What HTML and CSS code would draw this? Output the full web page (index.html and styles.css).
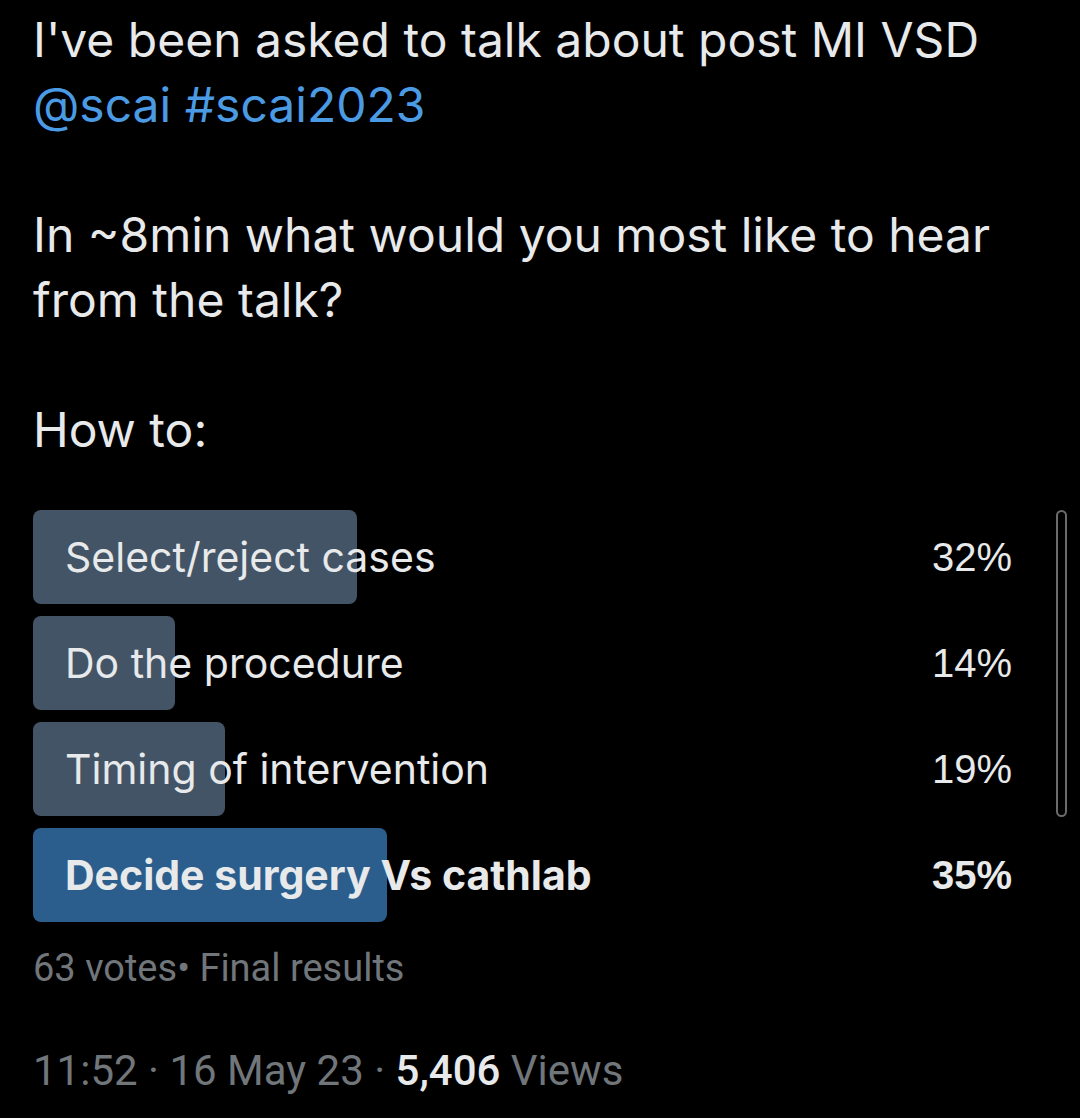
FILE: index.html
```html
<!DOCTYPE html>
<html lang="en">
<head>
  <meta charset="UTF-8">
  <title>Poll</title>
  <link rel="stylesheet" href="styles.css">
</head>
<body>
  <div class="tweet">
    <p class="text">I've been asked to talk about post MI VSD<br><span class="link">@scai</span> <span class="link">#scai2023</span></p>
    <p class="text">In ~8min what would you most like to hear from the talk?</p>
    <p class="text">How to:</p>

    <div class="poll">
      <div class="option">
        <div class="bar" style="width: 32%"></div>
        <span class="label">Select/reject cases</span>
        <span class="pct">32%</span>
      </div>
      <div class="option">
        <div class="bar" style="width: 14%"></div>
        <span class="label">Do the procedure</span>
        <span class="pct">14%</span>
      </div>
      <div class="option">
        <div class="bar" style="width: 19%"></div>
        <span class="label">Timing of intervention</span>
        <span class="pct">19%</span>
      </div>
      <div class="option winner">
        <div class="bar" style="width: 35%"></div>
        <span class="label">Decide surgery Vs cathlab</span>
        <span class="pct">35%</span>
      </div>
      <div class="scrollbar"></div>
    </div>

    <div class="votes">63 votes• Final results</div>
    <div class="meta">11:52 · 16 May 23 · <b>5,406</b> Views</div>
  </div>
</body>
</html>
```

FILE: styles.css
```css
body {
  margin: 0;
  background: #000;
  color: #e7e9ea;
  font-family: Inter, "Noto Sans", sans-serif;
}

.tweet {
  padding: 7px 35px 0 33px;
}

.text {
  margin: 0 0 65px;
  font-size: 48px;
  line-height: 65px;
}

.link {
  color: #4a9be4;
}

.poll {
  position: relative;
  display: flex;
  flex-direction: column;
  gap: 12px;
  margin-top: -17px;
}

.option {
  position: relative;
  display: flex;
  align-items: center;
  justify-content: space-between;
  height: 94px;
  padding: 0 33px 0 32px;
  font-size: 41px;
}

.bar {
  position: absolute;
  left: 0;
  top: 0;
  bottom: 0;
  background: #435466;
  border-radius: 8px;
}

.label,
.pct {
  position: relative;
}

.pct {
  font-family: "Liberation Sans", Arial, sans-serif;
  font-size: 40px;
}

.winner .bar {
  background: #2b5e8c;
}

.winner .label,
.winner .pct {
  font-weight: 700;
}

.scrollbar {
  position: absolute;
  right: -22px;
  top: 0;
  width: 7px;
  height: 303px;
  border: 2px solid #6b6b6b;
  border-radius: 6px;
}

.votes {
  margin-top: 24px;
  color: #71767b;
  font-family: Roboto, sans-serif;
  font-size: 38px;
}

.meta {
  margin-top: 56px;
  color: #71767b;
  font-family: Roboto, sans-serif;
  font-size: 42px;
}

.meta b {
  color: #e7e9ea;
  font-weight: 500;
}
```
